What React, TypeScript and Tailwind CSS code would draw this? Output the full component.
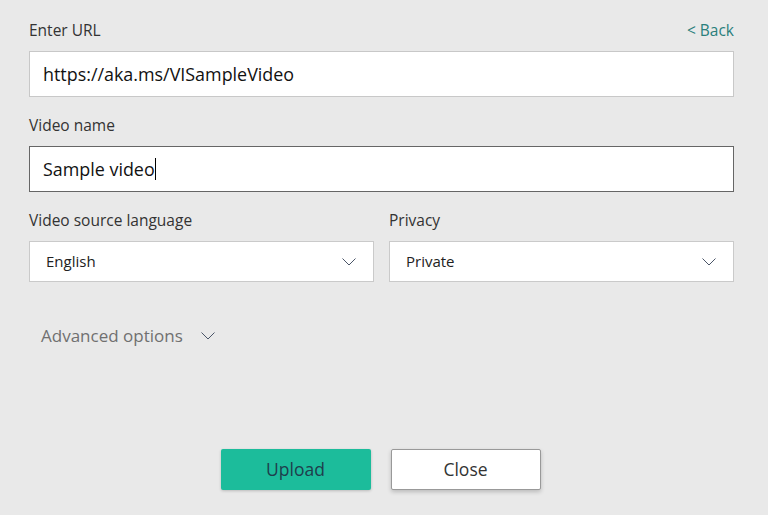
import React from "react";

const Chevron = ({ className }: { className?: string }) => (
  <svg className={className} width="14" height="8" viewBox="0 0 14 8" fill="none">
    <path d="M0.5 0.5 L7 7 L13.5 0.5" stroke="#4a5568" strokeWidth="1" />
  </svg>
);

export default function App() {
  return (
    <div
      className="w-[768px] h-[515px] bg-[#e9e9e9] overflow-hidden"
      style={{ fontFamily: '"Open Sans", "Noto Sans", sans-serif' }}
    >
      <div className="px-[29px] pt-[20px] w-[763px]">
        <div className="flex justify-between items-end h-[22px]">
          <span className="text-[15.5px] text-[#333]">Enter URL</span>
          <span className="text-[15.5px] text-[#2a7f7c]">&lt; Back</span>
        </div>
        <div className="mt-[9px] h-[46px] bg-white border border-[#c8c8c8] flex items-center pl-[13px] text-[17.9px] text-[#111]">
          https://aka.ms/VISampleVideo
        </div>

        <div className="mt-[18px] h-[22px] flex items-end">
          <span className="text-[15.5px] text-[#333]">Video name</span>
        </div>
        <div className="mt-[9px] h-[46px] bg-white border border-[#666] flex items-center pl-[13px] text-[17.9px] text-[#111]">
          <span>Sample video</span>
          <span className="w-px h-[22px] bg-black" />
        </div>

        <div className="mt-[18px] grid grid-cols-2 gap-[15px]">
          <div>
            <div className="h-[22px] flex items-end text-[15.5px] text-[#333]">Video source language</div>
            <div className="mt-[9px] h-[41px] bg-white border border-[#cacaca] flex items-center justify-between pl-[16px] pr-[17px] text-[15px] text-[#222]">
              <span>English</span>
              <Chevron />
            </div>
          </div>
          <div>
            <div className="h-[22px] flex items-end text-[15.5px] text-[#333]">Privacy</div>
            <div className="mt-[9px] h-[41px] bg-white border border-[#cacaca] flex items-center justify-between pl-[16px] pr-[17px] text-[15px] text-[#222]">
              <span>Private</span>
              <Chevron />
            </div>
          </div>
        </div>

        <div className="mt-[41px] pl-[12px] flex items-center gap-[18px] text-[17px] text-[#707070]">
          <span>Advanced options</span>
          <Chevron />
        </div>
      </div>

      <div className="mt-[100px] flex justify-center gap-[20px] pr-[7px]">
        <button className="w-[150px] h-[41px] rounded-[2px] bg-[#1cbc9b] text-[#1f3e4d] text-[17.5px] shadow-[0_1px_3px_rgba(0,0,0,0.2)]">
          Upload
        </button>
        <button className="w-[150px] h-[41px] rounded-[2px] bg-white border border-[#999] text-[#333] text-[17.5px] shadow-[0_2px_4px_rgba(0,0,0,0.2)]">
          Close
        </button>
      </div>
    </div>
  );
}
